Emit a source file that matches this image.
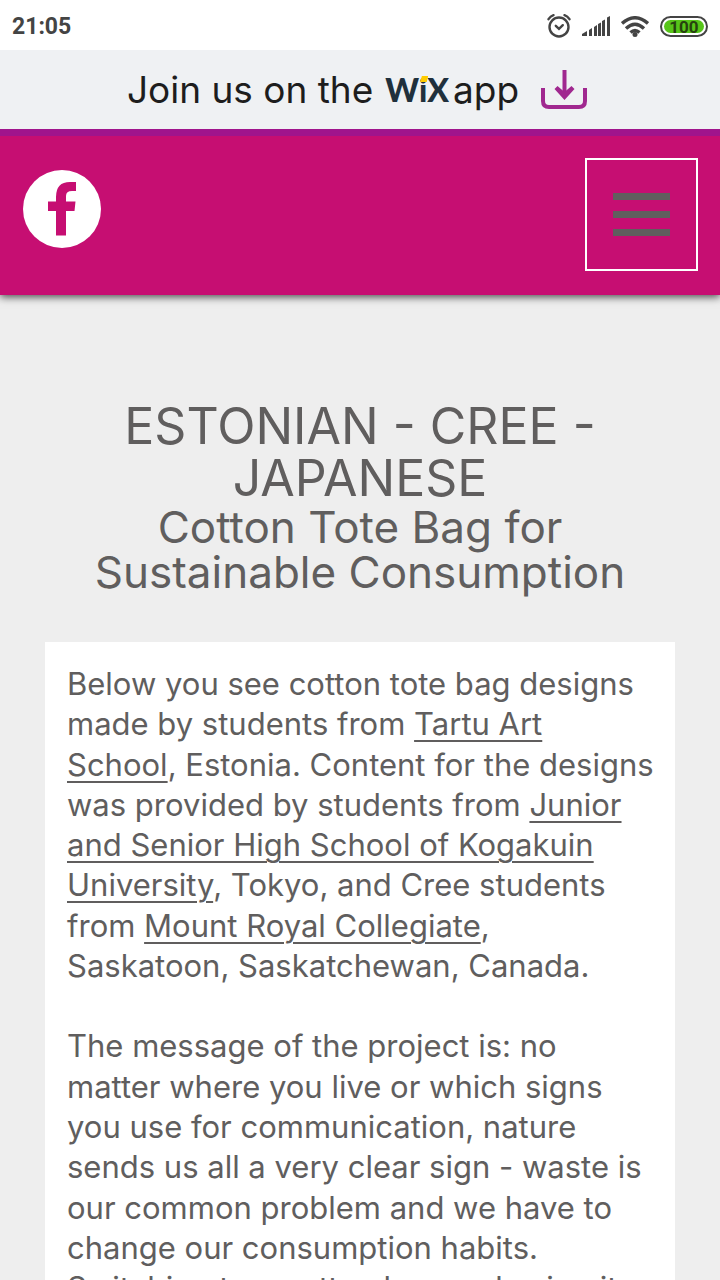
<template>
  <div class="page">
    <div class="status">
      <time>21:05</time>
      <div class="indicators">
        <svg width="24" height="24" viewBox="0 0 24 24" fill="none" stroke="#444" stroke-width="2.400" stroke-linecap="round">
          <circle cx="12" cy="13" r="9.500" />
          <path d="M8.800 11.800l3.200 3 3.800-3.600" />
          <path d="M1.500 5.200Q3.500 2.200 6.500 1.200M17.500 1.200q3 1 5 4" />
        </svg>
        <svg width="28" height="20" viewBox="0 0 28 20" fill="#444">
          <path d="M0 20v-2l5-3v5z" />
          <path d="M7 20v-6l3-2v8zM12 20v-9l3-2v11zM16 20V8l3-1.500V20zM20 20V5l3-1.500V20zM25 20V1.500L28 0v20z" />
        </svg>
        <svg width="28" height="21" viewBox="0 0 28 21" fill="none" stroke="#444" stroke-width="3.400">
          <path d="M1 7.500Q14-4 27 7.500M5 12.500q9-8.500 18 0M9.500 16.500q4.500-4 9 0" />
          <circle cx="14" cy="18.500" r="2.500" fill="#444" stroke="none" />
        </svg>
        <span class="battery"><span>100</span></span>
      </div>
    </div>

    <a class="banner" href="#app-download">
      <span>Join us on the</span>
      <span class="wix">WiX</span>
      <span class="app">app</span>
      <svg width="46" height="40" viewBox="0 0 46 40" fill="none" stroke="#a0288f" stroke-width="4">
        <path d="M2 18v13q0 6 6 6h30q6 0 6-6V18M23.500 0v26" />
        <path d="M13.500 19l10 11 10-11-3-3-7 6-7-6z" fill="#a0288f" stroke="none" />
      </svg>
    </a>

    <header class="top">
      <a href="#facebook" aria-label="Facebook">
        <svg width="80" height="80" viewBox="0 0 80 80">
          <circle cx="40" cy="40" r="39" fill="#fff" />
          <path fill="#c60e72" d="M34 66.500V42h-8v-9.500h8V28q0-15 14-15h6v9h-4q-6 0-6 5v5.500h9.500L52.500 42H44v24.500z" />
        </svg>
      </a>
      <button class="menu" type="button" aria-label="Menu"><i></i><i></i><i></i></button>
    </header>

    <main>
      <h1>ESTONIAN - CREE -<br />JAPANESE</h1>
      <h2>Cotton Tote Bag for<br />Sustainable Consumption</h2>
      <section class="card">
        <p>
          Below you see cotton tote bag designs<br />
          made by students from <a href="#tartu">Tartu Art<br />School</a>, Estonia. Content for the designs<br />
          was provided by students from <a href="#kogakuin">Junior<br />and Senior High School of Kogakuin<br />University</a>, Tokyo, and Cree students<br />
          from <a href="#mount-royal">Mount Royal Collegiate</a>,<br />
          Saskatoon, Saskatchewan, Canada.
        </p>
        <p>
          The message of the project is: no<br />
          matter where you live or which signs<br />
          you use for communication, nature<br />
          sends us all a very clear sign - waste is<br />
          our common problem and we have to<br />
          change our consumption habits.<br />
          Switching to a cotton bag and using it
        </p>
      </section>
    </main>
  </div>
</template>

<style>
html { background: #eee; }
html, body { height: 100%; overflow: hidden; }
</style>

<style scoped>
.page { background: #eee; color: #605e5e; font-family: Inter, sans-serif; height: 100vh; overflow: hidden; }
.status { display: flex; align-items: center; justify-content: space-between; box-sizing: border-box; height: 50px; padding: 2px 12px 0; background: #fff; color: #444; font: 700 23px Roboto, sans-serif; }
.indicators { display: flex; align-items: center; gap: 11px; }
.battery { display: flex; box-sizing: border-box; width: 48px; height: 21px; padding: 2px; border: 2px solid #444; border-radius: 11px; }
.battery span { flex: 1; border-radius: 8px; background: #57c519; color: #26420f; font-size: 17px; line-height: 14px; text-align: center; }
.banner { position: relative; z-index: 1; display: flex; align-items: center; justify-content: center; gap: 12px; height: 79px; padding-right: 6px; background: #eff1f3; color: #1d1d1d; font-size: 37px; text-decoration: none; }
.wix { position: relative; color: #20303c; font: 900 32px Lato, sans-serif; }
.wix::after { content: ""; position: absolute; left: 35px; top: 6px; width: 8px; height: 6px; background: #fc0; clip-path: polygon(20% 0, 100% 0, 80% 100%, 0 100%); }
.app { margin-left: -8px; }
.banner svg { margin-left: 10px; }
.top { position: relative; display: flex; align-items: flex-start; justify-content: space-between; box-sizing: border-box; height: 166px; padding: 22px 22px 0; border-top: 7px solid #a0148c; background: #c60e72; box-shadow: 0 2px 8px rgba(0, 0, 0, .7); }
.top a { display: flex; margin-top: 11px; }
.menu { display: flex; flex-direction: column; align-items: center; justify-content: center; gap: 11px; width: 113px; height: 113px; padding: 0; border: 2px solid #fff; background: none; }
.menu i { width: 57px; height: 7px; background: #605e5e; }
main { padding: 105px 45px 0; }
h1, h2 { margin: 0; text-align: center; font-weight: 400; white-space: nowrap; }
h1 { font-size: 50px; line-height: 52px; }
h2 { margin-top: 1px; font-size: 44px; line-height: 45px; }
.card { margin-top: 47px; padding: 22px 22px 0; background: #fff; }
p { margin: 0 0 40px; font-size: 31px; line-height: 1.3; white-space: nowrap; }
p a { color: inherit; text-decoration-thickness: 2px; text-underline-offset: 5px; }
</style>
